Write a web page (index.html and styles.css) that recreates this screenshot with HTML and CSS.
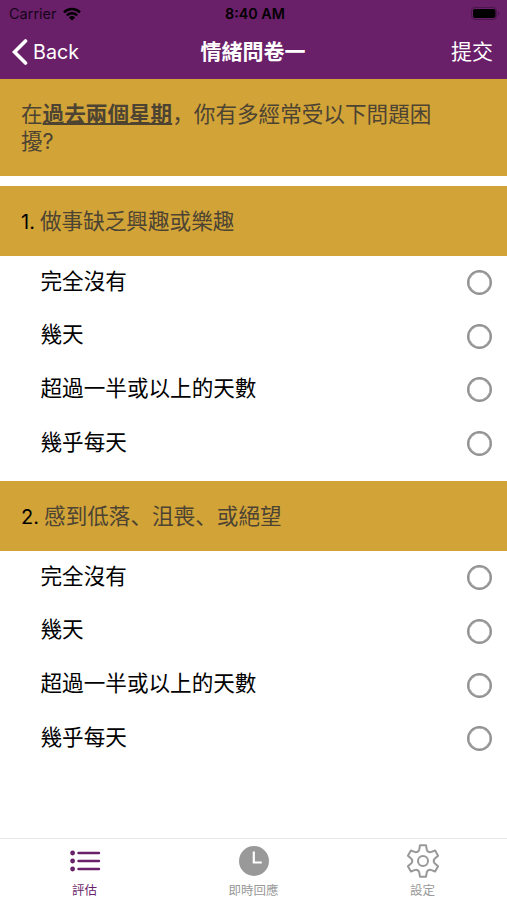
FILE: index.html
```html
<!DOCTYPE html>
<html lang="zh-Hans">
<head>
  <meta charset="UTF-8">
  <meta name="viewport" content="width=device-width, initial-scale=1.0">
  <title>情緒問卷一</title>
  <link rel="stylesheet" href="styles.css">
</head>
<body>

  <header class="header">
    <div class="status-bar">
      <div class="carrier">
        <span>Carrier</span>
        <svg class="wifi" viewBox="0 0 18 14" width="18" height="14">
          <path d="M1 5.3a11.4 11.4 0 0 1 16 0M3.8 8.3a7.4 7.4 0 0 1 10.4 0" fill="none" stroke="#000" stroke-width="2.5"/>
          <path d="M9 13.5 5.9 10.4a4.4 4.4 0 0 1 6.2 0z"/>
        </svg>
      </div>
      <div class="time">8:40 AM</div>
      <svg class="battery" viewBox="0 0 30 14" width="30" height="14">
        <rect x="0.5" y="0.5" width="25" height="12" rx="3.5" fill="none" stroke="#4a164d"/>
        <rect x="2" y="2" width="22.5" height="9" rx="2"/>
        <path d="M27 4.3q2.4 2.2 0 4.4z" fill="#4a164d"/>
      </svg>
    </div>
    <div class="nav-bar">
      <div class="back">
        <svg viewBox="0 0 16 26" width="16" height="26">
          <path d="M13.5 2 2.5 13l11 11" fill="none" stroke="#fff" stroke-width="3.6" stroke-linecap="round"/>
        </svg>
        <span>Back</span>
      </div>
      <div class="title">情緒問卷一</div>
      <div class="submit">提交</div>
    </div>
  </header>

  <main class="content">
    <div class="intro">在<b>過去兩個星期</b>，你有多經常受以下問題困擾?</div>

    <section class="question">
      <h2><span>1.</span> 做事缺乏興趣或樂趣</h2>
      <label class="option">完全沒有<input type="radio" name="q1"></label>
      <label class="option">幾天<input type="radio" name="q1"></label>
      <label class="option">超過一半或以上的天數<input type="radio" name="q1"></label>
      <label class="option">幾乎每天<input type="radio" name="q1"></label>
    </section>

    <section class="question">
      <h2><span>2.</span> 感到低落、沮喪、或絕望</h2>
      <label class="option">完全沒有<input type="radio" name="q2"></label>
      <label class="option">幾天<input type="radio" name="q2"></label>
      <label class="option">超過一半或以上的天數<input type="radio" name="q2"></label>
      <label class="option">幾乎每天<input type="radio" name="q2"></label>
    </section>
  </main>

  <nav class="tab-bar">
    <div class="tab active">
      <svg viewBox="0 0 34 34" width="34" height="34">
        <g fill="currentColor">
          <circle cx="4.6" cy="9" r="2.4"/>
          <circle cx="4.6" cy="17" r="2.4"/>
          <circle cx="4.6" cy="25" r="2.4"/>
        </g>
        <path d="M10.5 9h20.5M10.5 17h20.5M10.5 25h20.5" stroke="currentColor" stroke-width="2.4" stroke-linecap="round"/>
      </svg>
      <span>評估</span>
    </div>
    <div class="tab">
      <svg viewBox="0 0 34 34" width="34" height="34">
        <circle cx="17" cy="17" r="15" fill="currentColor"/>
        <path d="M16.8 7.5v11h8" fill="none" stroke="#fff" stroke-width="2.2"/>
      </svg>
      <span>即時回應</span>
    </div>
    <div class="tab">
      <svg viewBox="0 0 34 34" width="34" height="34">
        <g fill="none" stroke="currentColor" stroke-width="2" stroke-linejoin="round">
          <path d="M14 1.3H20L20.8 5.8Q21.9 8.5 24.8 8.1L29.1 6.5L32.1 11.7L28.6 14.7Q26.8 17 28.6 19.3L32.1 22.3L29.1 27.5L24.8 25.9Q21.9 25.5 20.8 28.2L20 32.7H14L13.2 28.2Q12.1 25.5 9.2 25.9L4.9 27.5L1.9 22.3L5.4 19.3Q7.2 17 5.4 14.7L1.9 11.7L4.9 6.5L9.2 8.1Q12.1 8.5 13.2 5.8Z"/>
          <circle cx="17" cy="17" r="5"/>
        </g>
      </svg>
      <span>設定</span>
    </div>
  </nav>

</body>
</html>
```
FILE: styles.css
```css
* {
  box-sizing: border-box;
}

body {
  margin: 0;
  height: 100vh;
  display: flex;
  flex-direction: column;
  overflow: hidden;
  background: #fff;
  font-family: Inter, 'Noto Sans CJK SC', sans-serif;
  color: #000;
}

.header {
  height: 79px;
  background: #6a1f69;
}

.status-bar {
  height: 27px;
  padding: 0 6px 0 9px;
  display: grid;
  grid-template-columns: 1fr auto 1fr;
  align-items: center;
  font-size: 14.5px;
}

.carrier {
  display: flex;
  align-items: center;
  gap: 6px;
  color: #16051a;
}

.time {
  font-weight: 600;
  font-size: 14.3px;
}

.battery {
  justify-self: end;
}

.nav-bar {
  height: 50px;
  padding: 0 14px 0 12px;
  display: grid;
  grid-template-columns: 1fr auto 1fr;
  align-items: center;
  font-size: 21px;
  line-height: 26px;
  color: #fff;
}

.back {
  display: flex;
  align-items: center;
  gap: 5px;
  font-size: 19.7px;
}

.title {
  font-weight: 700;
  padding-left: 1px;
}

.submit {
  justify-self: end;
}

.content {
  flex: 1;
}

.intro {
  height: 96.5px;
  margin-bottom: 10px;
  padding: 22px 60px 0 21px;
  background: #d2a437;
  color: #4d4333;
  font-size: 21.6px;
  line-height: 27px;
}

.intro b {
  text-decoration: underline;
  text-decoration-thickness: 2px;
  text-underline-offset: 1px;
}

.question {
  margin-bottom: 10.5px;
}

.question h2 {
  height: 70px;
  margin: 0;
  padding-left: 21px;
  background: #d2a437;
  color: #4d4333;
  font-size: 21.6px;
  font-weight: 400;
  line-height: 70px;
  word-spacing: -1px;
}

.question h2 span {
  color: #000;
  font-size: 20px;
}

.option {
  height: 53.7px;
  padding: 0 15px 0 40.5px;
  display: flex;
  justify-content: space-between;
  font-size: 21.6px;
  line-height: 50px;
}

.option input {
  appearance: none;
  width: 25px;
  height: 25px;
  margin: 14.5px 0 0;
  border: 2px solid #929292;
  border-radius: 50%;
  box-shadow: inset 0 0 0 0.5px #929292;
}

.tab-bar {
  height: 62px;
  padding-top: 5px;
  display: grid;
  grid-template-columns: repeat(3, 1fr);
  border-top: 1px solid #e8e8e8;
}

.tab {
  display: flex;
  flex-direction: column;
  align-items: center;
  gap: 4px;
  color: #999;
  font-size: 12.5px;
  line-height: 18px;
}

.tab.active {
  color: #6a1f69;
}
```
